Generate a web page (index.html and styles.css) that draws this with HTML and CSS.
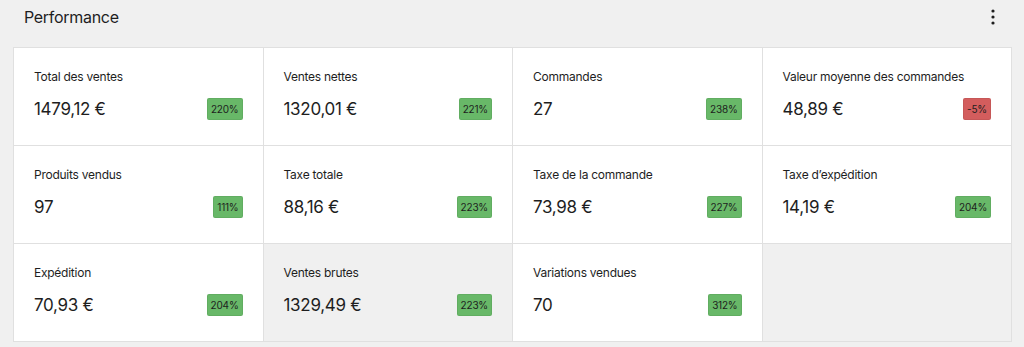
FILE: index.html
```html
<!DOCTYPE html>
<html lang="fr">
<head>
<meta charset="utf-8">
<link rel="stylesheet" href="styles.css">
</head>
<body>
<div class="page">
  <div class="header">
    <h2 class="title">Performance</h2>
    <button class="menu" aria-label="Options">
      <svg width="4" height="16" viewBox="0 0 4 16"><circle cx="2" cy="2" r="1.6"/><circle cx="2" cy="8" r="1.6"/><circle cx="2" cy="14" r="1.6"/></svg>
    </button>
  </div>
  <div class="grid">
    <div class="cell"><div class="label">Total des ventes</div><div class="row"><span class="value">1479,12 €</span><span class="badge up">220%</span></div></div>
    <div class="cell"><div class="label">Ventes nettes</div><div class="row"><span class="value">1320,01 €</span><span class="badge up">221%</span></div></div>
    <div class="cell"><div class="label">Commandes</div><div class="row"><span class="value">27</span><span class="badge up">238%</span></div></div>
    <div class="cell"><div class="label">Valeur moyenne des commandes</div><div class="row"><span class="value">48,89 €</span><span class="badge down">-5%</span></div></div>
    <div class="cell"><div class="label">Produits vendus</div><div class="row"><span class="value">97</span><span class="badge up">111%</span></div></div>
    <div class="cell"><div class="label">Taxe totale</div><div class="row"><span class="value">88,16 €</span><span class="badge up">223%</span></div></div>
    <div class="cell"><div class="label">Taxe de la commande</div><div class="row"><span class="value">73,98 €</span><span class="badge up">227%</span></div></div>
    <div class="cell"><div class="label">Taxe d’expédition</div><div class="row"><span class="value">14,19 €</span><span class="badge up">204%</span></div></div>
    <div class="cell"><div class="label">Expédition</div><div class="row"><span class="value">70,93 €</span><span class="badge up">204%</span></div></div>
    <div class="cell hover"><div class="label">Ventes brutes</div><div class="row"><span class="value">1329,49 €</span><span class="badge up">223%</span></div></div>
    <div class="cell"><div class="label">Variations vendues</div><div class="row"><span class="value">70</span><span class="badge up">312%</span></div></div>
    <div class="cell empty"></div>
  </div>
</div>
</body>
</html>
```

FILE: styles.css
```css
* { box-sizing: border-box; }
html, body { margin: 0; padding: 0; }
body {
  background: #f0f0f0;
  font-family: Inter, "Noto Sans", "Liberation Sans", sans-serif;
  color: #1e1e1e;
}
.page {
  padding: 0 12px 0 13px;
}
.header {
  height: 33px;
  display: flex;
  align-items: center;
  justify-content: space-between;
  margin-bottom: 14px;
}
.title {
  margin: 0 0 0 11px;
  font-size: 16px;
  letter-spacing: -0.3px;
  font-weight: 400;
  color: #1e1e1e;
}
.menu {
  border: 0;
  background: none;
  padding: 0;
  margin-right: 15px;
  width: 8px;
  height: 24px;
  display: flex;
  align-items: center;
  justify-content: center;
  fill: #1e1e1e;
}
.grid {
  display: grid;
  grid-template-columns: repeat(4, 1fr);
  grid-auto-rows: 97px;
  gap: 1px;
  background: #e0e0e0;
  border: 1px solid #e0e0e0;
}
.cell {
  background: #fff;
  padding: 21px 20px 0 20px;
  display: flex;
  flex-direction: column;
  gap: 13px;
}
.cell.hover, .cell.empty { background: #f0f0f0; }
.label {
  font-size: 12px;
  letter-spacing: -0.25px;
  line-height: 16px;
  color: #1e1e1e;
}
.row {
  display: flex;
  align-items: center;
  justify-content: space-between;
  height: 22px;
}
.value {
  font-size: 17px;
  letter-spacing: -0.3px;
  line-height: 22px;
}
.badge {
  font-size: 10px;
  letter-spacing: -0.2px;
  line-height: 20px;
  height: 22px;
  padding: 0 3px;
  border-radius: 2px;
  border: 1px solid rgba(0,0,0,0.06);
  color: #1e1e1e;
}
.badge.up { background: #68b868; }
.badge.down { background: #d35d5d; }
```
